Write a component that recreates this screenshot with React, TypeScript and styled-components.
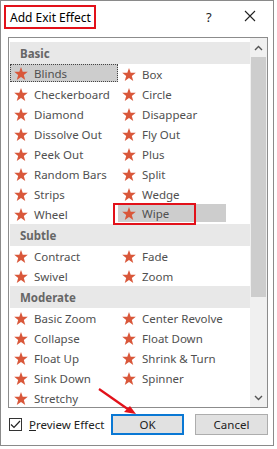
import styled, { createGlobalStyle } from "styled-components";

const GlobalStyle = createGlobalStyle`
  * { box-sizing: border-box; }
  body {
    margin: 0;
    background: #ffffff;
    font-family: "Noto Sans", "Liberation Sans", sans-serif;
  }
`;

const Dialog = styled.div`
  position: relative;
  width: 274px;
  height: 446px;
  border: 1px solid #8a8a8a;
  background: #ffffff;
  display: flex;
  flex-direction: column;
`;

const TitleBar = styled.div`
  height: 36px;
  display: flex;
  align-items: center;
  padding: 0 0 4px 3px;
`;

const Title = styled.div`
  width: 92px;
  height: 24px;
  padding-left: 4px;
  border: 2px solid #e2111a;
  display: flex;
  align-items: center;
  font-size: 12px;
  white-space: nowrap;
  color: #000;
`;

const TitleButton = styled.div<{ $left: number }>`
  margin-left: ${(p) => p.$left}px;
  font-size: 13px;
  color: #222;
  line-height: 1;
`;

const ListBox = styled.div`
  margin-left: 7px;
  width: 260px;
  height: 371px;
  border: 1px solid #8c8c8c;
  display: flex;
  background: #fff;
`;

const ListContent = styled.div`
  flex: 1;
  padding: 4px 0 0 1px;
  overflow: hidden;
`;

const GroupHeader = styled.div`
  height: 22px;
  width: 240px;
  background: #e8e8e8;
  display: flex;
  align-items: center;
  padding-left: 10px;
  font-size: 11.5px;
  font-weight: 700;
  color: #666;
`;

const Grid = styled.div`
  display: grid;
  grid-template-columns: 108px 108px;
`;

const Item = styled.div<{ $selected?: boolean; $shade?: boolean }>`
  position: relative;
  display: flex;
  align-items: center;
  gap: 6px;
  padding-left: 3px;
  font-size: 11.5px;
  white-space: nowrap;
  color: #505050;
  background: ${(p) => (p.$selected || p.$shade ? "#cdcdcd" : "transparent")};
  border: 1px ${(p) => (p.$selected ? "dotted #444" : "solid transparent")};
  margin-bottom: ${(p) => (p.$selected || p.$shade ? "2px" : "0")};
  height: ${(p) => (p.$selected || p.$shade ? "18px" : "20px")};
`;

const Highlight = styled.div`
  position: absolute;
  left: -6px;
  top: -2px;
  width: 83px;
  height: 22px;
  border: 2px solid #e2111a;
`;

const ScrollBar = styled.div`
  width: 17px;
  display: flex;
  flex-direction: column;
  background: #f0f0f0;
`;

const ScrollArrow = styled.div`
  height: 19px;
  display: flex;
  align-items: center;
  justify-content: center;
`;

const Thumb = styled.div`
  margin: 0 1px;
  height: 240px;
  background: #cdcdcd;
`;

const ScrollTrack = styled.div`
  flex: 1;
`;

const Footer = styled.div`
  flex: 1;
  display: flex;
  align-items: center;
  padding: 0 0 4px 8px;
`;

const CheckBox = styled.div`
  width: 13px;
  height: 13px;
  flex-shrink: 0;
  border: 1px solid #333;
  display: flex;
  align-items: center;
  justify-content: center;
  background: #fff;
`;

const CheckLabel = styled.div`
  width: 70px;
  margin-left: 7px;
  font-size: 11.5px;
  white-space: nowrap;
  color: #222;
  span {
    text-decoration: underline;
  }
`;

const Button = styled.div<{ $default?: boolean; $left: number }>`
  margin-left: ${(p) => p.$left}px;
  width: 73px;
  height: 21px;
  flex-shrink: 0;
  display: flex;
  align-items: center;
  justify-content: center;
  font-size: 11.5px;
  color: #222;
  background: #e1e1e1;
  border: ${(p) => (p.$default ? "2px solid #0a78d4" : "1px solid #adadad")};
`;

const Arrow = styled.svg`
  position: absolute;
  left: 94px;
  top: 384px;
`;

const Star = () => (
  <svg width="14" height="13" viewBox="0 0 24 23">
    <polygon
      points="12,0 15,8.3 24,8.6 17,14.2 19.5,23 12,17.8 4.5,23 7,14.2 0,8.6 9,8.3"
      fill="#d9573a"
    />
  </svg>
);

type Entry = { name: string; selected?: boolean; shade?: boolean; mark?: boolean };

const groups: { title: string; items: Entry[] }[] = [
  {
    title: "Basic",
    items: [
      { name: "Blinds", selected: true },
      { name: "Box" },
      { name: "Checkerboard" },
      { name: "Circle" },
      { name: "Diamond" },
      { name: "Disappear" },
      { name: "Dissolve Out" },
      { name: "Fly Out" },
      { name: "Peek Out" },
      { name: "Plus" },
      { name: "Random Bars" },
      { name: "Split" },
      { name: "Strips" },
      { name: "Wedge" },
      { name: "Wheel" },
      { name: "Wipe", shade: true, mark: true },
    ],
  },
  {
    title: "Subtle",
    items: [{ name: "Contract" }, { name: "Fade" }, { name: "Swivel" }, { name: "Zoom" }],
  },
  {
    title: "Moderate",
    items: [
      { name: "Basic Zoom" },
      { name: "Center Revolve" },
      { name: "Collapse" },
      { name: "Float Down" },
      { name: "Float Up" },
      { name: "Shrink & Turn" },
      { name: "Sink Down" },
      { name: "Spinner" },
      { name: "Stretchy" },
    ],
  },
];

export default function App() {
  return (
    <>
      <GlobalStyle />
      <Dialog>
        <TitleBar>
          <Title>Add Exit Effect</Title>
          <TitleButton $left={110}>?</TitleButton>
          <TitleButton $left={32}>
            <svg width="12" height="12" viewBox="0 0 12 12">
              <path d="M1 1L11 11M11 1L1 11" stroke="#222" strokeWidth="1.1" />
            </svg>
          </TitleButton>
        </TitleBar>
        <ListBox>
          <ListContent>
            {groups.map((g) => (
              <div key={g.title}>
                <GroupHeader>{g.title}</GroupHeader>
                <Grid>
                  {g.items.map((it) => (
                    <Item key={it.name} $selected={it.selected} $shade={it.shade}>
                      <Star />
                      {it.name}
                      {it.mark && <Highlight />}
                    </Item>
                  ))}
                </Grid>
              </div>
            ))}
          </ListContent>
          <ScrollBar>
            <ScrollArrow>
              <svg width="9" height="6" viewBox="0 0 9 6">
                <path d="M1 5L4.5 1.5L8 5" stroke="#555" strokeWidth="1.4" fill="none" />
              </svg>
            </ScrollArrow>
            <Thumb />
            <ScrollTrack />
            <ScrollArrow>
              <svg width="9" height="6" viewBox="0 0 9 6">
                <path d="M1 1L4.5 4.5L8 1" stroke="#555" strokeWidth="1.4" fill="none" />
              </svg>
            </ScrollArrow>
          </ScrollBar>
        </ListBox>
        <Footer>
          <CheckBox>
            <svg width="11" height="9" viewBox="0 0 11 9">
              <path d="M1 4.5L4 7.5L10 1" stroke="#222" strokeWidth="1.2" fill="none" />
            </svg>
          </CheckBox>
          <CheckLabel>
            <span>P</span>review Effect
          </CheckLabel>
          <Button $default $left={12}>
            OK
          </Button>
          <Button $left={11}>Cancel</Button>
        </Footer>
        <Arrow width="44" height="32" viewBox="0 0 44 32">
          <path d="M4 4L37 27" stroke="#e2111a" strokeWidth="2.2" />
          <polygon points="41,29 29,27 35,21" fill="#e2111a" />
        </Arrow>
      </Dialog>
    </>
  );
}
